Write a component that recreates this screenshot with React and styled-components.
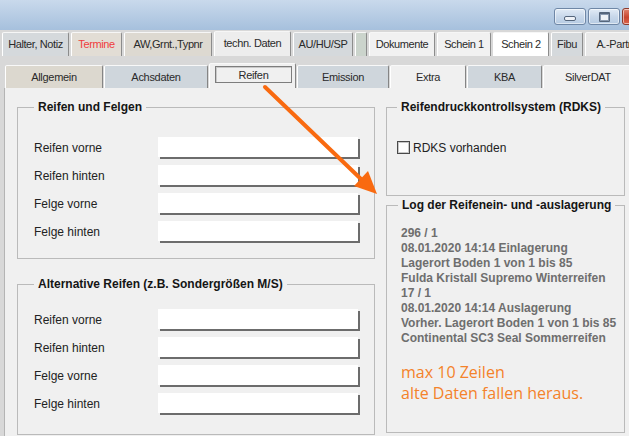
import styled, { createGlobalStyle } from 'styled-components';

const GlobalStyle = createGlobalStyle`
  html, body {
    margin: 0;
    padding: 0;
    background: #d8d8d8;
  }
  body {
    font-family: "Liberation Sans", Arial, sans-serif;
  }
  #root {
    width: 629px;
    height: 436px;
    overflow: hidden;
  }
`;

const mainTabs = [
  { label: 'Halter, Notiz', w: 67, bg: '#d5d9dc' },
  { label: 'Termine', w: 51, bg: '#e2ddd5', color: '#f03c3c' },
  { label: 'AW,Grnt.,Typnr', w: 88, bg: '#ddd9d1' },
  { label: 'techn. Daten', w: 77, bg: '#ededed', active: true },
  { label: 'AU/HU/SP', w: 60, bg: '#d5d9dc' },
  { label: '', w: 12, bg: '#cbd4cc' },
  { label: 'Dokumente', w: 66, bg: '#f1f1f1' },
  { label: 'Schein 1', w: 54, bg: '#f1f1f1' },
  { label: 'Schein 2', w: 56, bg: '#ffffff' },
  { label: 'Fibu', w: 32, bg: '#d5d9dc' },
  { label: 'A.-Partner', w: 69, bg: '#e8e8e8' },
];

const subTabs = [
  { label: 'Allgemein', w: 98, bg: '#dcd8cf' },
  { label: 'Achsdaten', w: 104, bg: '#cfd6dc' },
  { label: 'Reifen', w: 87, bg: '#f0f0f0', active: true },
  { label: 'Emission', w: 92, bg: '#cfd6dc' },
  { label: 'Extra', w: 76, bg: '#f0f0f0' },
  { label: 'KBA', w: 75, bg: '#cfd6dc' },
  { label: 'SilverDAT', w: 90, bg: '#f0f0f0' },
];

const tyreFields = ['Reifen vorne', 'Reifen hinten', 'Felge vorne', 'Felge hinten'];

const logLines = [
  '296 / 1',
  '08.01.2020 14:14 Einlagerung',
  'Lagerort Boden 1 von 1 bis 85',
  'Fulda Kristall Supremo Winterreifen',
  '17 / 1',
  '08.01.2020 14:14 Auslagerung',
  'Vorher. Lagerort Boden 1 von 1 bis 85',
  'Continental SC3 Seal Sommerreifen',
];

export default function App() {
  return (
    <Window>
      <GlobalStyle />
      <TitleBar>
        <WinButtons>
          <WinButton>
            <MinIcon />
          </WinButton>
          <WinButton>
            <MaxIcon />
          </WinButton>
          <WinButton $close />
        </WinButtons>
      </TitleBar>

      <MainTabs>
        {mainTabs.map((t, i) => (
          <MainTab
            key={i}
            $w={t.w}
            $bg={t.bg}
            $color={t.color}
            $active={t.active}>
            {t.label}
          </MainTab>
        ))}
      </MainTabs>

      <SubTabs>
        {subTabs.map((t) => (
          <SubTab
            key={t.label}
            $w={t.w}
            $bg={t.bg}
            $active={t.active}>
            {t.active ? <FocusRect>{t.label}</FocusRect> : t.label}
          </SubTab>
        ))}
      </SubTabs>

      <Panel>
        <Column>
          <GroupBox $pt={23} $pb={17} $pl={16}>
            <Legend>Reifen und Felgen</Legend>
            <FieldList>
              {tyreFields.map((f) => (
                <FieldRow key={f}>
                  <FieldLabel>{f}</FieldLabel>
                  <TextBox />
                </FieldRow>
              ))}
            </FieldList>
          </GroupBox>
          <GroupBox $pt={18} $pb={21} $pl={16} $mt={18}>
            <Legend>Alternative Reifen (z.B. Sondergrößen M/S)</Legend>
            <FieldList>
              {tyreFields.map((f) => (
                <FieldRow key={f}>
                  <FieldLabel>{f}</FieldLabel>
                  <TextBox />
                </FieldRow>
              ))}
            </FieldList>
          </GroupBox>
        </Column>

        <Column>
          <GroupBox $pt={26} $pb={40} $pl={10}>
            <Legend>Reifendruckkontrollsystem (RDKS)</Legend>
            <CheckRow>
              <CheckBox />
              RDKS vorhanden
            </CheckRow>
          </GroupBox>
          <GroupBox $pt={14} $pb={28} $pl={11} $mt={2}>
            <Legend>Log der Reifenein- und -auslagerung</Legend>
            <LogText>
              {logLines.map((l, i) => (
                <div key={i}>{l}</div>
              ))}
            </LogText>
            <Note>
              <div>max 10 Zeilen</div>
              <div>alte Daten fallen heraus.</div>
            </Note>
          </GroupBox>
        </Column>
      </Panel>

      <Arrow
        viewBox='0 0 629 436'
        width='629'
        height='436'>
        <line
          x1='265'
          y1='87'
          x2='362'
          y2='180'
          stroke='#f96a10'
          strokeWidth='4'
          strokeLinecap='round'
        />
        <polygon
          points='377,194 354,186 368,171'
          fill='#f96a10'
        />
      </Arrow>
    </Window>
  );
}

const Window = styled.div`
  position: relative;
  width: 629px;
  height: 436px;
  overflow: hidden;
  display: flex;
  flex-direction: column;
  background: #d8d8d8;
`;

const TitleBar = styled.div`
  height: 30px;
  flex: none;
  display: flex;
  justify-content: flex-end;
  align-items: flex-start;
  padding-top: 8px;
  box-sizing: border-box;
  background: linear-gradient(#c9d9ec, #a6c0dd);
`;

const WinButtons = styled.div`
  display: flex;
  gap: 2px;
  margin-right: -33px;
`;

const WinButton = styled.div`
  width: ${(p) => (p.$close ? 40 : 32)}px;
  height: 17px;
  box-sizing: border-box;
  border: 1px solid ${(p) => (p.$close ? '#8e3a2c' : '#6f87a6')};
  border-radius: 3px;
  background: ${(p) =>
    p.$close
      ? 'linear-gradient(#e0836e, #c9452f 55%, #d9634b)'
      : 'linear-gradient(#e2ebf6, #c8d8ea 50%, #b6cbe3)'};
  box-shadow: inset 0 0 0 1px rgba(255, 255, 255, 0.55);
  display: flex;
  align-items: center;
  justify-content: center;
`;

const MinIcon = styled.div`
  width: 10px;
  height: 3px;
  margin-top: 4px;
  border: 1px solid #55667c;
  border-radius: 2px;
  background: #eef2f7;
`;

const MaxIcon = styled.div`
  width: 9px;
  height: 7px;
  border: 1px solid #55667c;
  border-top-width: 2px;
  border-radius: 1px;
  background: #eef2f7;
  box-shadow: inset 0 0 0 1px #8a9ab0;
`;

const MainTabs = styled.div`
  height: 26px;
  flex: none;
  display: flex;
  align-items: flex-end;
  gap: 2px;
  padding-left: 2px;
`;

const MainTab = styled.div`
  flex: none;
  box-sizing: border-box;
  width: ${(p) => p.$w}px;
  height: ${(p) => (p.$active ? 25 : 24)}px;
  background: ${(p) => p.$bg};
  color: ${(p) => p.$color || '#2a2a2a'};
  border-top: 1px solid #f6f6f6;
  border-left: 1px solid #ffffff;
  border-right: 1px solid #8c8c8c;
  border-radius: 2px 2px 0 0;
  font-size: 11px;
  letter-spacing: -0.4px;
  white-space: nowrap;
  overflow: hidden;
  display: flex;
  align-items: center;
  justify-content: center;
  padding-bottom: ${(p) => (p.$active ? 2 : 1)}px;
`;

const SubTabs = styled.div`
  height: 25px;
  flex: none;
  margin-top: 7px;
  display: flex;
  align-items: flex-end;
  gap: 1px;
  padding-left: 5px;
`;

const SubTab = styled.div`
  flex: none;
  box-sizing: border-box;
  width: ${(p) => p.$w}px;
  height: ${(p) => (p.$active ? 25 : 23)}px;
  background: ${(p) => p.$bg};
  color: #2a2a2a;
  border-top: 1px solid #f8f8f8;
  border-left: 1px solid #ffffff;
  border-right: 1px solid #858585;
  border-radius: 2px 2px 0 0;
  font-size: 11px;
  letter-spacing: -0.3px;
  white-space: nowrap;
  display: flex;
  align-items: center;
  justify-content: center;
  padding: ${(p) => (p.$active ? '2px 3px 5px 5px' : '0')};
`;

const FocusRect = styled.div`
  flex: 1;
  align-self: stretch;
  display: flex;
  align-items: center;
  justify-content: center;
  border: 1px solid #7d7d7d;
  box-shadow: inset 1px 1px 0 #c9c9c9;
`;

const Panel = styled.div`
  flex: 1;
  margin-left: 4px;
  border-left: 1px solid #b4b4b4;
  background: #f0f0f0;
  padding: 12px 0 0 12px;
  display: grid;
  grid-template-columns: 358px 239px;
  column-gap: 11px;
  align-items: start;
`;

const Column = styled.div`
  display: flex;
  flex-direction: column;
`;

const GroupBox = styled.fieldset`
  margin: ${(p) => p.$mt || 0}px 0 0 0;
  min-width: 0;
  border: 1px solid #bababa;
  padding: ${(p) => p.$pt}px 0 ${(p) => p.$pb}px ${(p) => p.$pl}px;
`;

const Legend = styled.legend`
  padding: 0 4px;
  font-size: 12px;
  line-height: 14px;
  font-weight: bold;
  color: #151515;
`;

const FieldList = styled.div`
  display: flex;
  flex-direction: column;
  gap: 8px;
`;

const FieldRow = styled.div`
  display: grid;
  grid-template-columns: 124px 200px;
  align-items: center;
  height: 20px;
`;

const FieldLabel = styled.span`
  font-size: 12px;
  color: #222;
  padding-top: 2px;
`;

const TextBox = styled.div`
  height: 20px;
  background: #ffffff;
  box-shadow: 2px 2px 0 0 #6c6c6c;
`;

const CheckRow = styled.label`
  display: flex;
  align-items: center;
  gap: 3px;
  height: 15px;
  font-size: 12px;
  color: #222;
`;

const CheckBox = styled.span`
  width: 13px;
  height: 13px;
  box-sizing: border-box;
  border: 1px solid #4a4a4a;
  box-shadow: inset 0 0 0 1px #c8c8c8;
  background: #fff;
`;

const LogText = styled.div`
  padding-left: 3px;
  font-size: 12px;
  line-height: 15px;
  font-weight: bold;
  color: #6e6e6e;
  white-space: nowrap;
`;

const Note = styled.div`
  margin-top: 16px;
  padding-left: 3px;
  font-family: "Open Sans", "Liberation Sans", sans-serif;
  font-size: 16px;
  line-height: 21px;
  color: #f4822a;
`;

const Arrow = styled.svg`
  position: absolute;
  top: 0;
  left: 0;
  pointer-events: none;
`;
